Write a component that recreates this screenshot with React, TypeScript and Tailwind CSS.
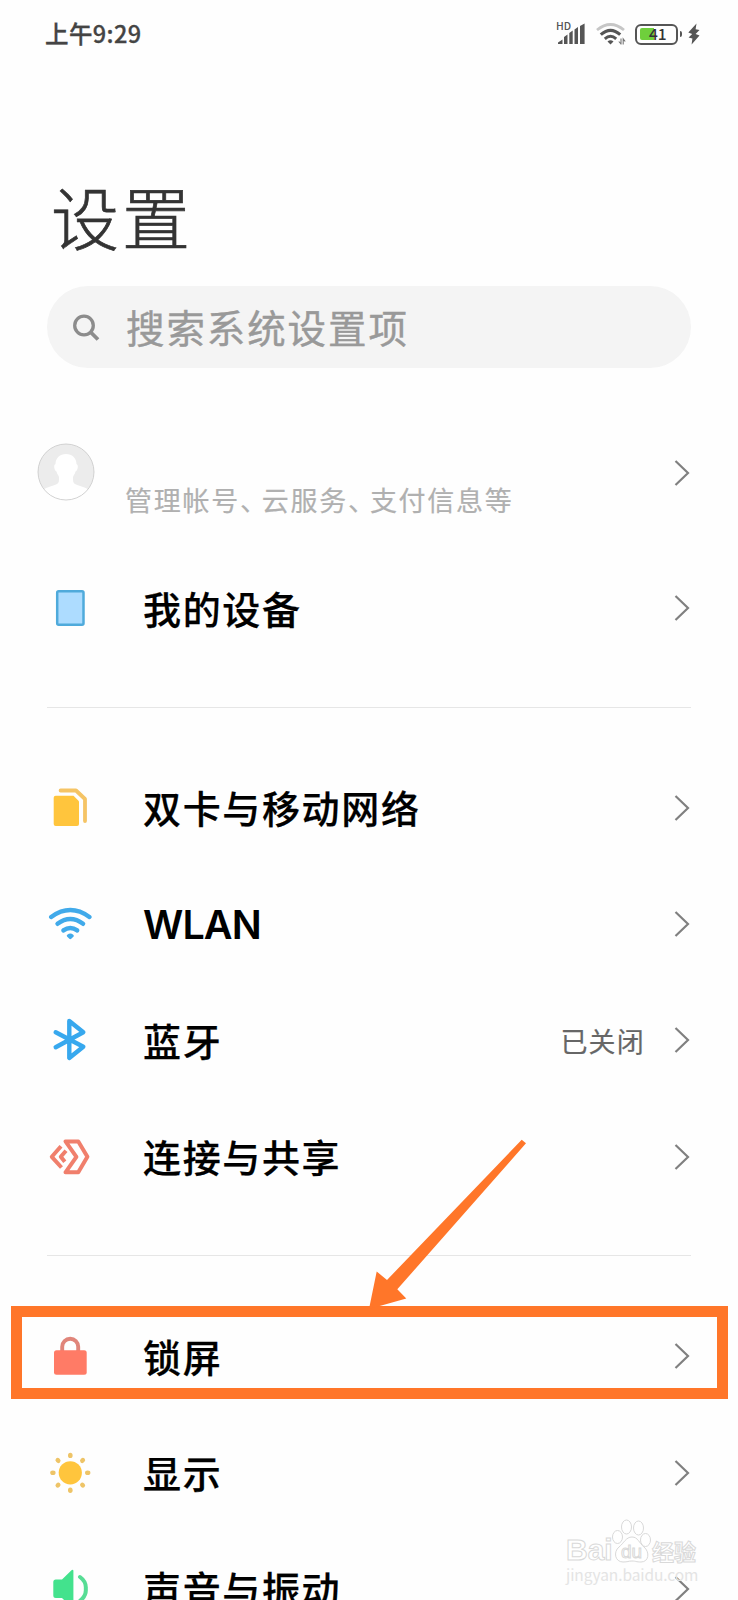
import type { ReactNode } from 'react';

type SettingRowProps = {
  icon: ReactNode;
  label: string;
  value?: string;
  latin?: boolean;
};

function Chevron() {
  return (
    <svg className="w-4 h-[26px] shrink-0" viewBox="0 0 16 26" fill="none" stroke="#808080" strokeWidth="2.2">
      <path d="M1.5 1 L14 13 L1.5 25" />
    </svg>
  );
}

function SettingRow({ icon, label, value, latin }: SettingRowProps) {
  const labelFont = latin
    ? "text-[39.5px] tracking-[-0.9px] font-semibold pt-[4px] font-['Inter',sans-serif]"
    : 'text-[38px] tracking-[1.65px] font-medium pb-[1px] [-webkit-text-stroke:0.25px_#000]';

  return (
    <div className="flex h-[116.4px] shrink-0 items-center pl-12 pr-12">
      <svg className="h-11 w-11 shrink-0" viewBox="0 0 44 44" fill="none">
        {icon}
      </svg>
      <span className={`ml-[51px] flex-1 whitespace-nowrap leading-none text-black ${labelFont}`}>{label}</span>
      {value && (
        <span className="mr-[29px] text-[27px] leading-none tracking-[1.2px] text-[#666] [-webkit-text-stroke:0.2px_#666]">
          {value}
        </span>
      )}
      <Chevron />
    </div>
  );
}

function Divider() {
  return <div className="mx-[47px] h-px shrink-0 bg-[#e6e6e6]" />;
}

const deviceIcon = <rect x="9.2" y="5.2" width="26.3" height="33.6" rx="1.5" fill="#addcff" stroke="#4faadb" strokeWidth="2.5" />;

const simIcon = (
  <>
    <path d="M7.7 9.7 H25.5 L31 15.2 V38 Q31 40 29 40 H7.7 Q5.7 40 5.7 38 V11.7 Q5.7 9.7 7.7 9.7Z" fill="#ffc53d" />
    <path d="M12.6 4.5 H28 L37 13 V35" stroke="#f5c465" strokeWidth="3.8" strokeLinecap="round" strokeLinejoin="round" />
  </>
);

const wlanIcon = (
  <g stroke="#41aaea" strokeWidth="4.4" strokeLinecap="round">
    <path d="M3.2 15 Q22.3 1.2 41.4 15" />
    <path d="M9.5 21.8 Q22.3 12.2 35.1 21.8" />
    <path d="M15.4 28.4 Q22.3 23.4 29.2 28.4" />
    <path d="M20.2 33.8 Q22.3 32.2 24.4 33.8 L22.3 35.8Z" fill="#41aaea" strokeWidth="2.8" strokeLinejoin="round" />
  </g>
);

const bluetoothIcon = (
  <path
    d="M7.7 14.2 L35.3 28.8 L21.3 40 V3 L35.3 14.2 L7.7 29.2"
    stroke="#37a8ee"
    strokeWidth="4.4"
    strokeLinecap="round"
    strokeLinejoin="round"
  />
);

const shareIcon = (
  <g stroke="#f07f6c" strokeWidth="4" strokeLinejoin="round">
    <path d="M17.5 6.4 H30.3 L39.4 21.8 L30.3 37.3 H17.5 L28.4 21.8Z" />
    <path d="M13 11.3 L3.8 21.8 L13.5 32.5" />
    <path d="M18 15.8 L12.8 21.8 L16.8 26.8" />
  </g>
);

const lockIcon = (
  <>
    <path d="M14.2 17 V12.8 A8 8 0 0 1 30.2 12.8 V17" stroke="#e0857a" strokeWidth="3.9" />
    <rect x="6" y="16.3" width="32.7" height="24.4" rx="2.5" fill="#ff7b66" />
  </>
);

const sunRays = [0, 45, 90, 135, 180, 225, 270, 315];

const sunIcon = (
  <>
    <circle cx="22.3" cy="21.8" r="11.6" fill="#ffc53d" />
    {sunRays.map((angle) => (
      <ellipse key={angle} cx="22.3" cy="4.4" rx="2.3" ry="2.7" fill="#eec467" transform={`rotate(${angle} 22.3 21.8)`} />
    ))}
  </>
);

const soundIcon = (
  <>
    <path d="M7.8 12.5 H14 L23.5 3.2 Q25.4 2 25.4 4 V39.6 Q25.4 41.6 23.5 40.4 L14 31 H7.8 Q5.3 31 5.3 28.5 V15 Q5.3 12.5 7.8 12.5Z" fill="#43e28d" />
    <path d="M32 10 Q38.4 14.6 37.8 21.8 Q38.4 29 32 33.8" stroke="#57dd95" strokeWidth="4" strokeLinecap="round" />
  </>
);

function StatusBar() {
  return (
    <div className="flex h-[68px] shrink-0 items-center justify-between pl-[45px] pr-[38px]">
      <div className="text-[23.5px] font-medium leading-none tracking-[0.4px] text-[#444] [-webkit-text-stroke:0.3px_#444]">上午9:29</div>
      <div className="flex items-center">
        <div className="relative">
          <svg className="h-[22px] w-[29px]" viewBox="0 0 29 22" fill="#555">
            <path d="M1 21 V19.5 L5.5 16.5 V21Z M7 21 V14 L10.5 11.5 V21Z M12.3 21 V10 L15.7 7.6 V21Z M17.5 21 V6.4 L21 4 V21Z M23 21 V3 L27.6 .5 V21Z" />
          </svg>
          <span className="absolute left-[-1px] top-[-1px] text-[10.5px] font-medium leading-[8px] text-[#555]">HD</span>
        </div>
        <svg className="ml-[10px] h-[22px] w-[30px]" viewBox="0 0 30 22" fill="none" strokeWidth="2.8">
          <path d="M1 7 Q14.5 -4 28 7" stroke="#c6c6c6" />
          <path d="M4.8 11.6 Q14.5 3 24.2 11.6" stroke="#555" strokeWidth="3.2" />
          <path d="M8.8 15.8 Q14.5 10.8 20.2 15.8" stroke="#555" strokeWidth="3" />
          <path d="M11.5 18.5 Q14.5 16 17.5 18.5 L14.5 21.5Z" fill="#555" />
          <path d="M25 15.5 V21.5 M22.8 18.5 L25 21 M27.2 21.5 V15.8 L29.2 18.5" stroke="#777" strokeWidth="1.1" />
        </svg>
        <div className="ml-[9px] flex h-[21px] w-[43px] items-center rounded-[6px] border-[2.5px] border-[#555] pl-[3px]">
          <div className="h-[12px] w-[14px] shrink-0 rounded-l-[2px] bg-[#6fcf3c]" />
          <span className="-ml-[5px] pb-[1px] text-[15.5px] font-medium leading-none text-[#333]">41</span>
        </div>
        <div className="ml-[2px] h-[6px] w-[2px] rounded-r bg-[#555]" />
        <svg className="ml-[6px] h-[22px] w-[12px]" viewBox="0 0 12 22" fill="#555">
          <path d="M8.5 .5 L.3 9.5 L4.2 11 L.6 14.5 L4.4 15.4 L3.6 21.5 L11.5 12.6 L7.6 11 L11.5 7 L7.6 6.2Z" />
        </svg>
      </div>
    </div>
  );
}

function Watermark() {
  return (
    <div className="absolute left-[566px] top-[1519px] w-[132px] text-white">
      <div className="flex h-[44px] items-end [-webkit-text-stroke:1px_#d9d9d9]">
        <span className="w-[46px] font-['Liberation_Sans',sans-serif] text-[30px] font-bold leading-[27px]">Bai</span>
        <div className="relative flex h-[44px] w-[39px] shrink-0 items-end justify-center">
          <svg className="absolute inset-0 h-[44px] w-[39px]" viewBox="0 0 39 44" fill="#fff" stroke="#d9d9d9" strokeWidth="1">
            <ellipse cx="5.5" cy="18" rx="5" ry="6.5" />
            <ellipse cx="14.5" cy="8" rx="5" ry="7" />
            <ellipse cx="26.5" cy="9" rx="5" ry="7" />
            <ellipse cx="33.5" cy="21" rx="5" ry="6.5" />
            <path d="M20 18 C14 18 12 24 7 28 C1 33 3 43 11 43 C16 43 16 42 20 42 C24 42 24 43 29 43 C37 43 38 33 32 28 C27 24 26 18 20 18Z" />
          </svg>
          <span className="relative font-['Liberation_Sans',sans-serif] text-[19px] leading-[22px]">du</span>
        </div>
        <span className="ml-[1px] whitespace-nowrap text-[22px] font-bold leading-[26px]">经验</span>
      </div>
      <div className="mt-[1px] whitespace-nowrap text-[15.5px] leading-[20px] tracking-[-0.1px] text-[#e4e4e4]">jingyan.baidu.com</div>
    </div>
  );
}

export default function App() {
  return (
    <div className="relative flex h-[1600px] w-[738px] flex-col overflow-hidden bg-[#fefefe] font-['Noto_Sans_CJK_SC',sans-serif]">
      <StatusBar />

      <h1 className="mt-[114px] ml-[51px] shrink-0 text-[68px] font-light leading-[68px] tracking-[3px] text-[#333] [-webkit-text-stroke:0.7px_#333]">
        设置
      </h1>

      <div className="mx-[47px] mt-[36px] flex h-[82px] shrink-0 items-center rounded-full bg-[#f4f4f4] pl-[25px]">
        <svg className="h-7 w-7" viewBox="0 0 28 28" fill="none" stroke="#8c8c8c" strokeWidth="3.3">
          <circle cx="12" cy="12.5" r="9.3" />
          <path d="M18.5 19 L26 26.5" strokeWidth="3.8" />
        </svg>
        <span className="ml-[26px] pb-[2px] text-[38.5px] leading-none tracking-[1.9px] text-[#999] [-webkit-text-stroke:0.4px_#999]">
          搜索系统设置项
        </span>
      </div>

      <div className="mt-[53px] flex h-[103px] shrink-0 items-center pl-[37px] pr-12">
        <svg className="mb-[2px] h-[58px] w-[58px] shrink-0" viewBox="0 0 58 58">
          <clipPath id="avatar">
            <circle cx="29" cy="29" r="28" />
          </clipPath>
          <circle cx="29" cy="29" r="28" fill="#ececec" />
          <path
            clipPath="url(#avatar)"
            fill="#fff"
            d="M29 11 C35 11 39.5 15 39.5 21 C42 22 40.5 28 38.5 28.5 C38 31 36.5 32 36 34 C36 38 36 40 38 41 C44 44 50 44 54 49 V58 H4 V49 C8 44 14 44 20 41 C22 40 22 38 22 34 C21.5 32 20 31 19.5 28.5 C17.5 28 16 22 18.5 21 C18.5 15 23 11 29 11Z"
          />
          <circle cx="29" cy="29" r="28" fill="none" stroke="#c8c8c8" strokeWidth="0.8" />
        </svg>
        <div className="ml-[30px] flex-1 self-end pb-[11px] text-[27px] leading-none tracking-[1.75px] text-[#b0b0b0] [-webkit-text-stroke:0.2px_#b0b0b0]">
          管理帐号<span className="tracking-[-5.2px]">、</span>云服务<span className="tracking-[-5.2px]">、</span>支付信息等
        </div>
        <Chevron />
      </div>

      <div className="mt-[26px] flex shrink-0 flex-col">
        <SettingRow icon={deviceIcon} label="我的设备" />
      </div>

      <div className="mt-[41px] shrink-0">
        <Divider />
      </div>

      <div className="mt-[41px] flex shrink-0 flex-col">
        <SettingRow icon={simIcon} label="双卡与移动网络" />
        <SettingRow icon={wlanIcon} label="WLAN" latin />
        <SettingRow icon={bluetoothIcon} label="蓝牙" value="已关闭" />
        <SettingRow icon={shareIcon} label="连接与共享" />
      </div>

      <div className="mt-[40px] shrink-0">
        <Divider />
      </div>

      <div className="mt-[42px] flex shrink-0 flex-col">
        <SettingRow icon={lockIcon} label="锁屏" />
        <SettingRow icon={sunIcon} label="显示" />
        <SettingRow icon={soundIcon} label="声音与振动" />
      </div>

      {/* annotation: frame and arrow pointing at the lock screen row */}
      <div className="absolute left-[11px] top-[1306px] h-[93px] w-[717px] border-[11.5px] border-[#ff7629]" />
      <svg className="absolute left-[368px] top-[1138px] h-[172px] w-[160px]" viewBox="368 1138 160 172" fill="#ff7629">
        <path d="M521.7 1139.7 L526 1143.3 L397.3 1289.3 L406.3 1298.5 L369 1309 L376.7 1271.5 L387 1280Z" />
      </svg>

      <Watermark />
    </div>
  );
}
